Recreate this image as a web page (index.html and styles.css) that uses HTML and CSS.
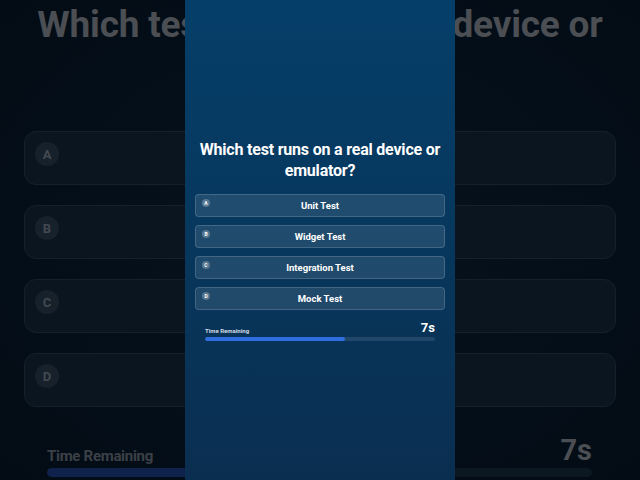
FILE: index.html
```html
<!DOCTYPE html>
<html>
<head>
<meta charset="utf-8">
<link rel="stylesheet" href="styles.css">
</head>
<body>
<div class="stage">
  <div class="backdrop">
    <h1 class="bg-title">Which test runs on a real device or emulator?</h1>
    <div class="bg-options">
      <div class="bg-option"><span class="bg-letter">A</span></div>
      <div class="bg-option"><span class="bg-letter">B</span></div>
      <div class="bg-option"><span class="bg-letter">C</span></div>
      <div class="bg-option"><span class="bg-letter">D</span></div>
    </div>
    <div class="bg-timer">
      <div class="bg-timer-row"><span class="bg-timer-label">Time Remaining</span><span class="bg-timer-value">7s</span></div>
      <div class="bg-track"><div class="bg-fill" style="width:61%"></div></div>
    </div>
  </div>
  <div class="panel">
    <h2 class="title">Which test runs on a real device or emulator?</h2>
    <div class="options">
      <div class="option"><span class="letter">A</span><span class="option-text">Unit Test</span></div>
      <div class="option"><span class="letter">B</span><span class="option-text">Widget Test</span></div>
      <div class="option"><span class="letter">C</span><span class="option-text">Integration Test</span></div>
      <div class="option"><span class="letter">D</span><span class="option-text">Mock Test</span></div>
    </div>
    <div class="timer">
      <div class="timer-row"><span class="timer-label">Time Remaining</span><span class="timer-value">7s</span></div>
      <div class="track"><div class="fill" style="width:61%"></div></div>
    </div>
  </div>
</div>
</body>
</html>
```

FILE: styles.css
```css
* { box-sizing: border-box; margin: 0; padding: 0; }
html, body { width: 640px; height: 480px; overflow: hidden; background: #040e18; }
body { font-family: Roboto, "Noto Sans", sans-serif; }

.stage {
  display: grid;
  width: 640px;
  height: 480px;
}
.backdrop, .panel { grid-area: 1 / 1; }

.backdrop {
  background: radial-gradient(ellipse at center, #07131e 0%, #040e18 60%, #030c15 100%);
  padding: 3px 24px 0 24px;
  display: flex;
  flex-direction: column;
}
.bg-title {
  font-size: 37px;
  line-height: 44px;
  font-weight: 700;
  color: #4b4e53;
  text-align: center;
  letter-spacing: -0.2px;
  height: 88px;
}
.bg-options {
  margin-top: 40px;
  display: flex;
  flex-direction: column;
  gap: 20px;
}
.bg-option {
  height: 54px;
  border-radius: 12px;
  background: #0a151f;
  border: 1px solid #152029;
  padding: 10px 0 0 10px;
}
.bg-letter {
  display: flex;
  align-items: center;
  justify-content: center;
  width: 24px;
  height: 24px;
  border-radius: 50%;
  background: #16212b;
  color: #434950;
  font-size: 13px;
  font-weight: 700;
}
.bg-timer {
  margin-top: 25px;
  padding: 0 24px 0 23px;
}
.bg-timer-row {
  display: flex;
  justify-content: space-between;
  align-items: flex-end;
  height: 33px;
}
.bg-timer-label {
  font-size: 15px;
  font-weight: 700;
  color: #3b4047;
  line-height: 18px;
  letter-spacing: -0.3px;
}
.bg-timer-value {
  font-size: 29px;
  font-weight: 700;
  color: #4b4e53;
  line-height: 30px;
}
.bg-track {
  margin-top: 3px;
  height: 9px;
  border-radius: 5px;
  background: #0b1822;
  overflow: hidden;
}
.bg-fill {
  height: 100%;
  background: #0f224b;
  border-radius: 5px;
}

.panel {
  justify-self: center;
  width: 270px;
  height: 480px;
  background: linear-gradient(180deg, #053f69 0%, #07375d 50%, #0a2e50 100%);
  padding: 139px 10px 0 10px;
  display: flex;
  flex-direction: column;
}
.title {
  color: #ffffff;
  font-size: 16px;
  line-height: 21px;
  font-weight: 700;
  text-align: center;
  letter-spacing: -0.2px;
}
.options {
  margin-top: 13px;
  display: flex;
  flex-direction: column;
  gap: 8px;
}
.option {
  position: relative;
  height: 23px;
  border-radius: 4px;
  background: rgba(255,255,255,0.1);
  border: 1px solid rgba(255,255,255,0.16);
  display: flex;
  align-items: center;
  justify-content: center;
}
.letter {
  position: absolute;
  left: 6px;
  top: 4px;
  width: 8px;
  height: 8px;
  border-radius: 50%;
  background: rgba(255,255,255,0.25);
  color: #ffffff;
  font-size: 5px;
  font-weight: 700;
  display: flex;
  align-items: center;
  justify-content: center;
}
.option-text {
  color: #ffffff;
  font-size: 9.5px;
  font-weight: 700;
}
.timer {
  margin-top: 11px;
  padding: 0 10px;
}
.timer-row {
  display: flex;
  justify-content: space-between;
  align-items: flex-end;
  height: 14px;
}
.timer-label {
  font-size: 6px;
  font-weight: 700;
  color: #d3dbe5;
  line-height: 8px;
}
.timer-value {
  font-size: 13px;
  font-weight: 700;
  color: #ffffff;
  line-height: 14px;
}
.track {
  margin-top: 2px;
  height: 4px;
  border-radius: 2px;
  background: rgba(255,255,255,0.1);
  overflow: hidden;
}
.fill {
  height: 100%;
  background: #2f6ee0;
  border-radius: 2px;
}
```
